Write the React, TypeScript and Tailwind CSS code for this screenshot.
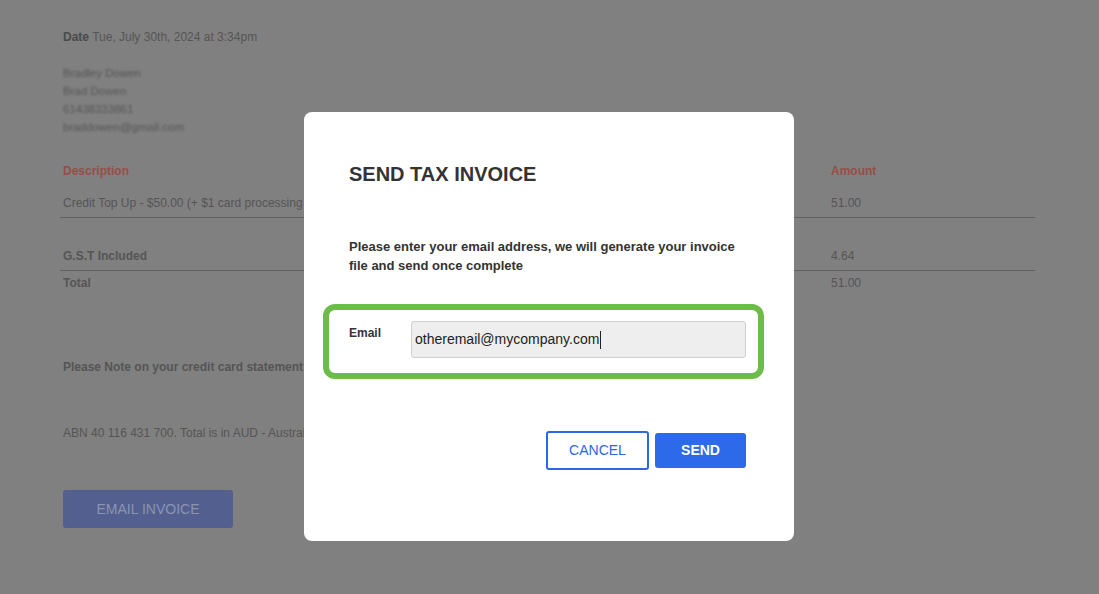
const details = ['Bradley Dowen', 'Brad Dowen', '61438333861', 'braddowen@gmail.com']

export default function App() {
  return (
    <div className="relative min-h-[594px] w-full bg-[#808080] font-['Liberation_Sans',Arial,sans-serif] text-[#555]">
      {/* invoice behind the overlay */}
      <div className="pl-[63px] pr-[64px] pt-[29px]">
        <p className="text-[12px] leading-[16px]">
          <span className="font-bold text-[#4a4a4a]">Date</span> Tue, July 30th, 2024 at 3:34pm
        </p>

        <div className="mt-[19px] text-[11.5px] leading-[18px] blur-[1.2px]">
          {details.map((d) => (
            <p key={d}>{d}</p>
          ))}
        </div>

        <div className="-ml-[3px] mt-[26px] text-[12px] leading-[18px]">
          <div className="flex pl-[3px] font-bold text-[#974e47]">
            <span className="flex-1">Description</span>
            <span className="w-[204px]">Amount</span>
          </div>
          <div className="mt-[14px] flex border-b border-[#606060] pb-[5px] pl-[3px]">
            <span className="flex-1">Credit Top Up - $50.00 (+ $1 card processing fee)</span>
            <span className="w-[204px]">51.00</span>
          </div>
          <div className="flex border-b border-[#606060] pb-[5px] pl-[3px] pt-[29px]">
            <span className="flex-1 font-bold">G.S.T Included</span>
            <span className="w-[204px]">4.64</span>
          </div>
          <div className="flex pl-[3px] pt-[3px]">
            <span className="flex-1 font-bold">Total</span>
            <span className="w-[204px]">51.00</span>
          </div>
        </div>

        <p className="mt-[66px] text-[12px] font-bold leading-[18px]">
          Please Note on your credit card statement this transaction will appear as ...
        </p>
        <p className="mt-[48px] text-[12px] leading-[18px]">ABN 40 116 431 700. Total is in AUD - Australian Dollars</p>

        <button className="mt-[48px] h-[38px] w-[170px] rounded-[3px] bg-[#525f8f] text-[14px] text-[#8d94b0]">
          EMAIL INVOICE
        </button>
      </div>

      {/* modal */}
      <div className="absolute left-[304px] top-[112px] flex h-[429px] w-[490px] flex-col rounded-[8px] bg-white pl-[45px] pr-[48px]">
        <h2 className="mt-[50px] text-[20px] font-bold leading-[24px] text-[#333]">SEND TAX INVOICE</h2>
        <p className="mt-[51px] text-[13px] font-bold leading-[19px] text-[#333]">
          Please enter your email address, we will generate your invoice file and send once complete
        </p>

        <div className="-ml-[26px] -mr-[18px] mt-[29px] flex h-[75px] items-start rounded-[12px] border-[6px] border-[#6cbb4b] pl-[20px] pr-[12px] pt-[11px]">
          <label className="w-[62px] pt-[3px] text-[12px] font-bold text-[#333]">Email</label>
          <div className="flex h-[37px] flex-1 items-center rounded-[3px] border border-[#cfcfcf] bg-[#eeeeee] px-[3px] text-[14px] text-[#222]">
            otheremail@mycompany.com
            <span className="ml-px h-[18px] w-px bg-[#222]" />
          </div>
        </div>

        <div className="mt-[52px] flex justify-end gap-[6px]">
          <button className="h-[39px] w-[103px] rounded-[3px] border-2 border-[#2d66e8] text-[14px] text-[#2d66e8]">
            CANCEL
          </button>
          <button className="mt-[2px] h-[35px] w-[91px] rounded-[3px] bg-[#2d6ae9] text-[14px] font-semibold text-white">
            SEND
          </button>
        </div>
      </div>
    </div>
  )
}
